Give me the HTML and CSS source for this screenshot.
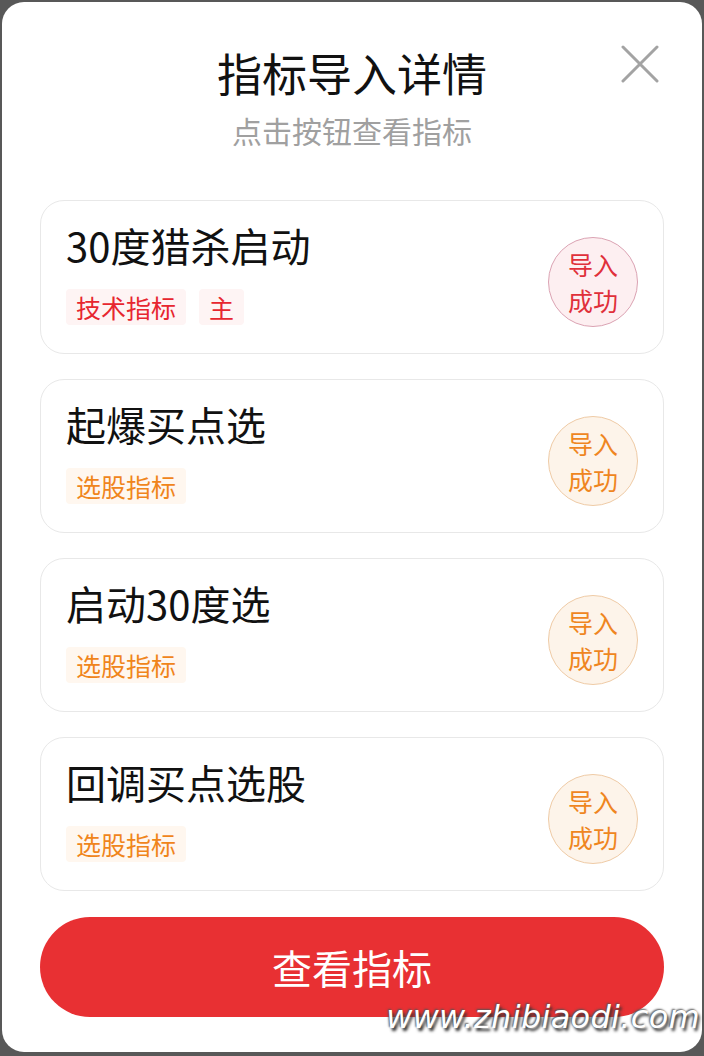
FILE: index.html
```html
<!DOCTYPE html>
<html lang="zh-CN">
<head>
  <meta charset="UTF-8">
  <title>指标导入详情</title>
  <link rel="stylesheet" href="styles.css">
</head>
<body>
  <!-- Import result dialog -->
  <div id="dialog">
    <button class="close-button" aria-label="关闭">
      <svg width="38" height="38" viewBox="0 0 38 38">
        <path d="M2 2 L36 36 M36 2 L2 36" stroke="#a3a3a3" stroke-width="3" stroke-linecap="round" fill="none"/>
      </svg>
    </button>

    <h1 class="dialog-title">指标导入详情</h1>
    <p class="dialog-subtitle">点击按钮查看指标</p>

    <div class="card-list">
      <div class="card">
        <div class="card-info">
          <div class="card-name">30度猎杀启动</div>
          <div class="tag-row">
            <span class="tag tag-red">技术指标</span>
            <span class="tag tag-red">主</span>
          </div>
        </div>
        <div class="status status-red">导入<br>成功</div>
      </div>

      <div class="card">
        <div class="card-info">
          <div class="card-name">起爆买点选</div>
          <div class="tag-row">
            <span class="tag tag-orange">选股指标</span>
          </div>
        </div>
        <div class="status status-orange">导入<br>成功</div>
      </div>

      <div class="card">
        <div class="card-info">
          <div class="card-name">启动30度选</div>
          <div class="tag-row">
            <span class="tag tag-orange">选股指标</span>
          </div>
        </div>
        <div class="status status-orange">导入<br>成功</div>
      </div>

      <div class="card">
        <div class="card-info">
          <div class="card-name">回调买点选股</div>
          <div class="tag-row">
            <span class="tag tag-orange">选股指标</span>
          </div>
        </div>
        <div class="status status-orange">导入<br>成功</div>
      </div>
    </div>

    <button class="view-button">查看指标</button>
  </div>

  <!-- Site watermark over the screenshot -->
  <div class="watermark">www.zhibiaodi.com</div>
</body>
</html>
```

FILE: styles.css
```css
body {
  margin: 0;
  background: #585858;
  font-family: "Noto Sans CJK SC", "Noto Sans", sans-serif;
  position: relative;
  height: 1056px;
  overflow: hidden;
}
#dialog {
  position: relative;
  margin: 2px 2px 0 2px;
  background: #fff;
  border-radius: 22px;
  padding: 43px 38px 35px 38px;
  display: flex;
  flex-direction: column;
  align-items: stretch;
}
.close-button {
  position: absolute;
  top: 43px;
  right: 43px;
  width: 38px;
  height: 38px;
  padding: 0;
  border: none;
  background: none;
}
.close-button svg {
  display: block;
}
.dialog-title {
  margin: 0;
  text-align: center;
  font-size: 45px;
  line-height: 56px;
  font-weight: 400;
  color: #111;
}
.dialog-subtitle {
  margin: 9px 0 0 0;
  height: 40px;
  text-align: center;
  font-size: 30px;
  line-height: 40px;
  color: #a0a0a0;
}
.card-list {
  margin-top: 50px;
  display: flex;
  flex-direction: column;
  gap: 25px;
}
.card {
  height: 154px;
  box-sizing: border-box;
  border: 1px solid #e8e8e8;
  border-radius: 24px;
  padding: 19px 25px 0 25px;
  display: flex;
  justify-content: space-between;
  align-items: flex-start;
}
.card-info {
  display: flex;
  flex-direction: column;
  gap: 19px;
}
.card-name {
  height: 50px;
  font-size: 40px;
  line-height: 50px;
  color: #111;
}
.tag-row {
  display: flex;
  gap: 13px;
}
.tag {
  height: 36px;
  font-size: 25px;
  line-height: 36px;
  padding: 0 10px;
  border-radius: 4px;
}
.tag-red {
  color: #e7262f;
  background: #fef4f4;
}
.tag-orange {
  color: #f0851b;
  background: #fff7ef;
}
.status {
  align-self: center;
  width: 88px;
  height: 88px;
  border-radius: 50%;
  margin-top: -9px;
  display: flex;
  align-items: center;
  justify-content: center;
  text-align: center;
  font-size: 25px;
  line-height: 36px;
}
.status-red {
  color: #e0303a;
  background: #fdeff1;
  border: 1px solid #dba3b3;
}
.status-orange {
  color: #ef861f;
  background: #fdf4ea;
  border: 1px solid #efcba6;
}
.view-button {
  margin-top: 26px;
  height: 100px;
  border: none;
  border-radius: 50px;
  background: #e83033;
  color: #fff;
  font-family: "Noto Sans CJK SC", "Noto Sans", sans-serif;
  font-size: 40px;
}
.watermark {
  position: absolute;
  right: 4px;
  top: 998px;
  font-family: "DejaVu Sans", sans-serif;
  font-style: italic;
  font-size: 32px;
  letter-spacing: 0.3px;
  color: #fff;
  text-shadow: 2px 3px 3px #333, -1px -1px 2px #555;
}
```
